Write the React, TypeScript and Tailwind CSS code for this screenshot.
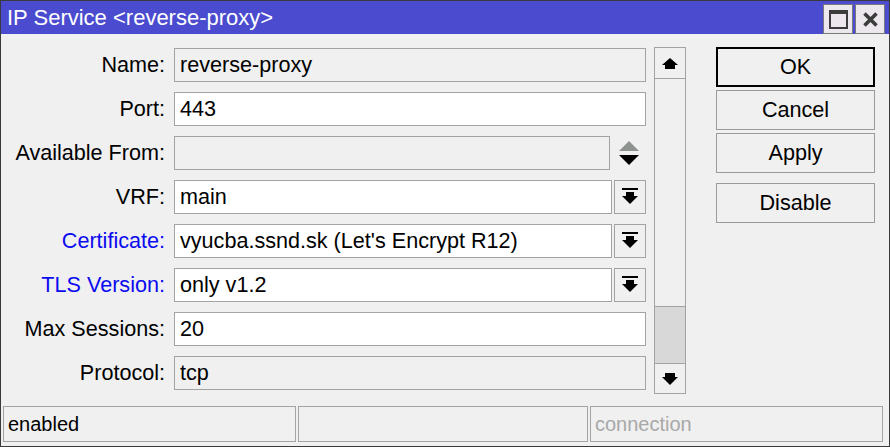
import React from 'react'

/** One labelled row of the form. */
interface FieldRowProps {
  label: string
  value?: string
  blue?: boolean
  disabled?: boolean
  kind?: 'plain' | 'dropdown' | 'spinner'
}

const DropIcon = () => (
  <svg width="16" height="17" viewBox="0 0 16 17">
    <rect x="0" y="0" width="16" height="2" fill="#000" />
    <rect x="4" y="4" width="8" height="5" fill="#000" />
    <polygon points="0,8 16,8 8,16" fill="#000" />
  </svg>
)

const SpinIcon = () => (
  <svg width="20" height="24" viewBox="0 0 20 24">
    <polygon points="10,0 20,10 0,10" fill="#8f938f" />
    <polygon points="0,14 20,14 10,24" fill="#000" />
  </svg>
)

const ArrowUp = () => (
  <svg width="16" height="11" viewBox="0 0 16 11">
    <polygon points="8,0 16,7 0,7" fill="#000" />
    <rect x="3" y="7" width="10" height="4" fill="#000" />
  </svg>
)

const ArrowDown = () => (
  <svg width="16" height="12" viewBox="0 0 16 12">
    <rect x="3" y="0" width="10" height="4" fill="#000" />
    <polygon points="0,4 16,4 8,12" fill="#000" />
  </svg>
)

function FieldRow({ label, value = '', blue, disabled, kind = 'plain' }: FieldRowProps) {
  const box = disabled ? 'bg-[#f0f0f0]' : 'bg-white'
  return (
    <div className="flex h-[34px] items-center">
      <div
        className={`w-[164px] text-right ${blue ? 'text-[#0b0bf0]' : 'text-black'}`}
      >
        {label}
      </div>
      <div className="ml-[9px] flex h-full">
        <div
          className={`flex h-full items-center border border-[#a3a3a3] pl-[5px] ${box} ${
            kind === 'plain' ? 'w-[472px]' : kind === 'dropdown' ? 'w-[438px]' : 'w-[436px]'
          }`}
        >
          {value}
        </div>
        {kind === 'dropdown' && (
          <div className="ml-[2px] flex h-full w-[32px] items-start justify-center border border-[#a3a3a3] bg-[#f0f0f0] pt-[7px]">
            <DropIcon />
          </div>
        )}
        {kind === 'spinner' && (
          <div className="flex h-full w-[36px] items-center justify-center pl-[2px]">
            <SpinIcon />
          </div>
        )}
      </div>
    </div>
  )
}

function SideButton({ text, primary }: { text: string; primary?: boolean }) {
  return (
    <div
      className={`flex h-[40px] w-[159px] items-center justify-center bg-[#f0f0f0] ${
        primary ? 'border-2 border-black' : 'border border-[#9a9a9a]'
      }`}
    >
      {text}
    </div>
  )
}

export default function App() {
  return (
    <div
      className="flex h-[447px] w-[890px] flex-col border border-[#3a3a3a] bg-[#f0f0f0] text-[21.6px] leading-none text-black"
      style={{ fontFamily: '"Liberation Sans", Arial, sans-serif' }}
    >
      {/* title bar */}
      <div className="flex h-[33px] items-center bg-[#4b4bcf] pl-[6px] pr-[4px]">
        <span className="flex-1 text-[22px] text-white">IP Service &lt;reverse-proxy&gt;</span>
        <div className="flex gap-[2px] self-start pt-[3px]">
          <div className="flex h-[30px] w-[30px] items-center justify-center border border-[#7a7a7a] bg-[#ebe7ec]">
            <div className="h-[19px] w-[19px] border-2 border-t-4 border-[#3c3c3c]" />
          </div>
          <div className="flex h-[30px] w-[30px] items-center justify-center border border-[#7a7a7a] bg-[#ebe7ec]">
            <svg width="15" height="15" viewBox="0 0 15 15">
              <path d="M1.5 1.5 L13.5 13.5 M13.5 1.5 L1.5 13.5" stroke="#3c3c3c" strokeWidth="3.6" />
            </svg>
          </div>
        </div>
      </div>

      {/* main area */}
      <div className="flex h-[372px]">
        <div className="flex flex-col gap-[10px] pt-[14px]">
          <FieldRow label="Name:" value="reverse-proxy" disabled />
          <FieldRow label="Port:" value="443" />
          <FieldRow label="Available From:" disabled kind="spinner" />
          <FieldRow label="VRF:" value="main" kind="dropdown" />
          <FieldRow label="Certificate:" value="vyucba.ssnd.sk (Let's Encrypt R12)" blue kind="dropdown" />
          <FieldRow label="TLS Version:" value="only v1.2" blue kind="dropdown" />
          <FieldRow label="Max Sessions:" value="20" />
          <FieldRow label="Protocol:" value="tcp" disabled />
        </div>

        {/* scrollbar */}
        <div className="ml-[8px] mt-[13px] flex h-[347px] w-[32px] flex-col border border-[#a3a3a3] bg-[#f0f0f0]">
          <div className="flex h-[31px] items-center justify-center border-b border-[#a3a3a3]">
            <ArrowUp />
          </div>
          <div className="flex-1" />
          <div className="h-[57px] border-t border-[#a3a3a3] bg-[#d8d8d8]" />
          <div className="flex h-[30px] items-center justify-center border-t border-[#a3a3a3]">
            <ArrowDown />
          </div>
        </div>

        {/* buttons */}
        <div className="ml-[30px] mt-[13px] flex flex-col gap-[3px]">
          <SideButton text="OK" primary />
          <SideButton text="Cancel" />
          <SideButton text="Apply" />
          <div className="mt-[7px]">
            <SideButton text="Disable" />
          </div>
        </div>
      </div>

      {/* status bar */}
      <div className="flex h-[36px] gap-[2px] px-[2px] text-[20px]">
        <div className="flex w-[293px] items-center border border-[#a3a3a3] pl-[4px]">enabled</div>
        <div className="flex w-[290px] items-center border border-[#a3a3a3]" />
        <div className="flex w-[293px] items-center border border-[#a3a3a3] pl-[4px] text-[#a8a8a8]">
          connection
        </div>
      </div>
    </div>
  )
}
